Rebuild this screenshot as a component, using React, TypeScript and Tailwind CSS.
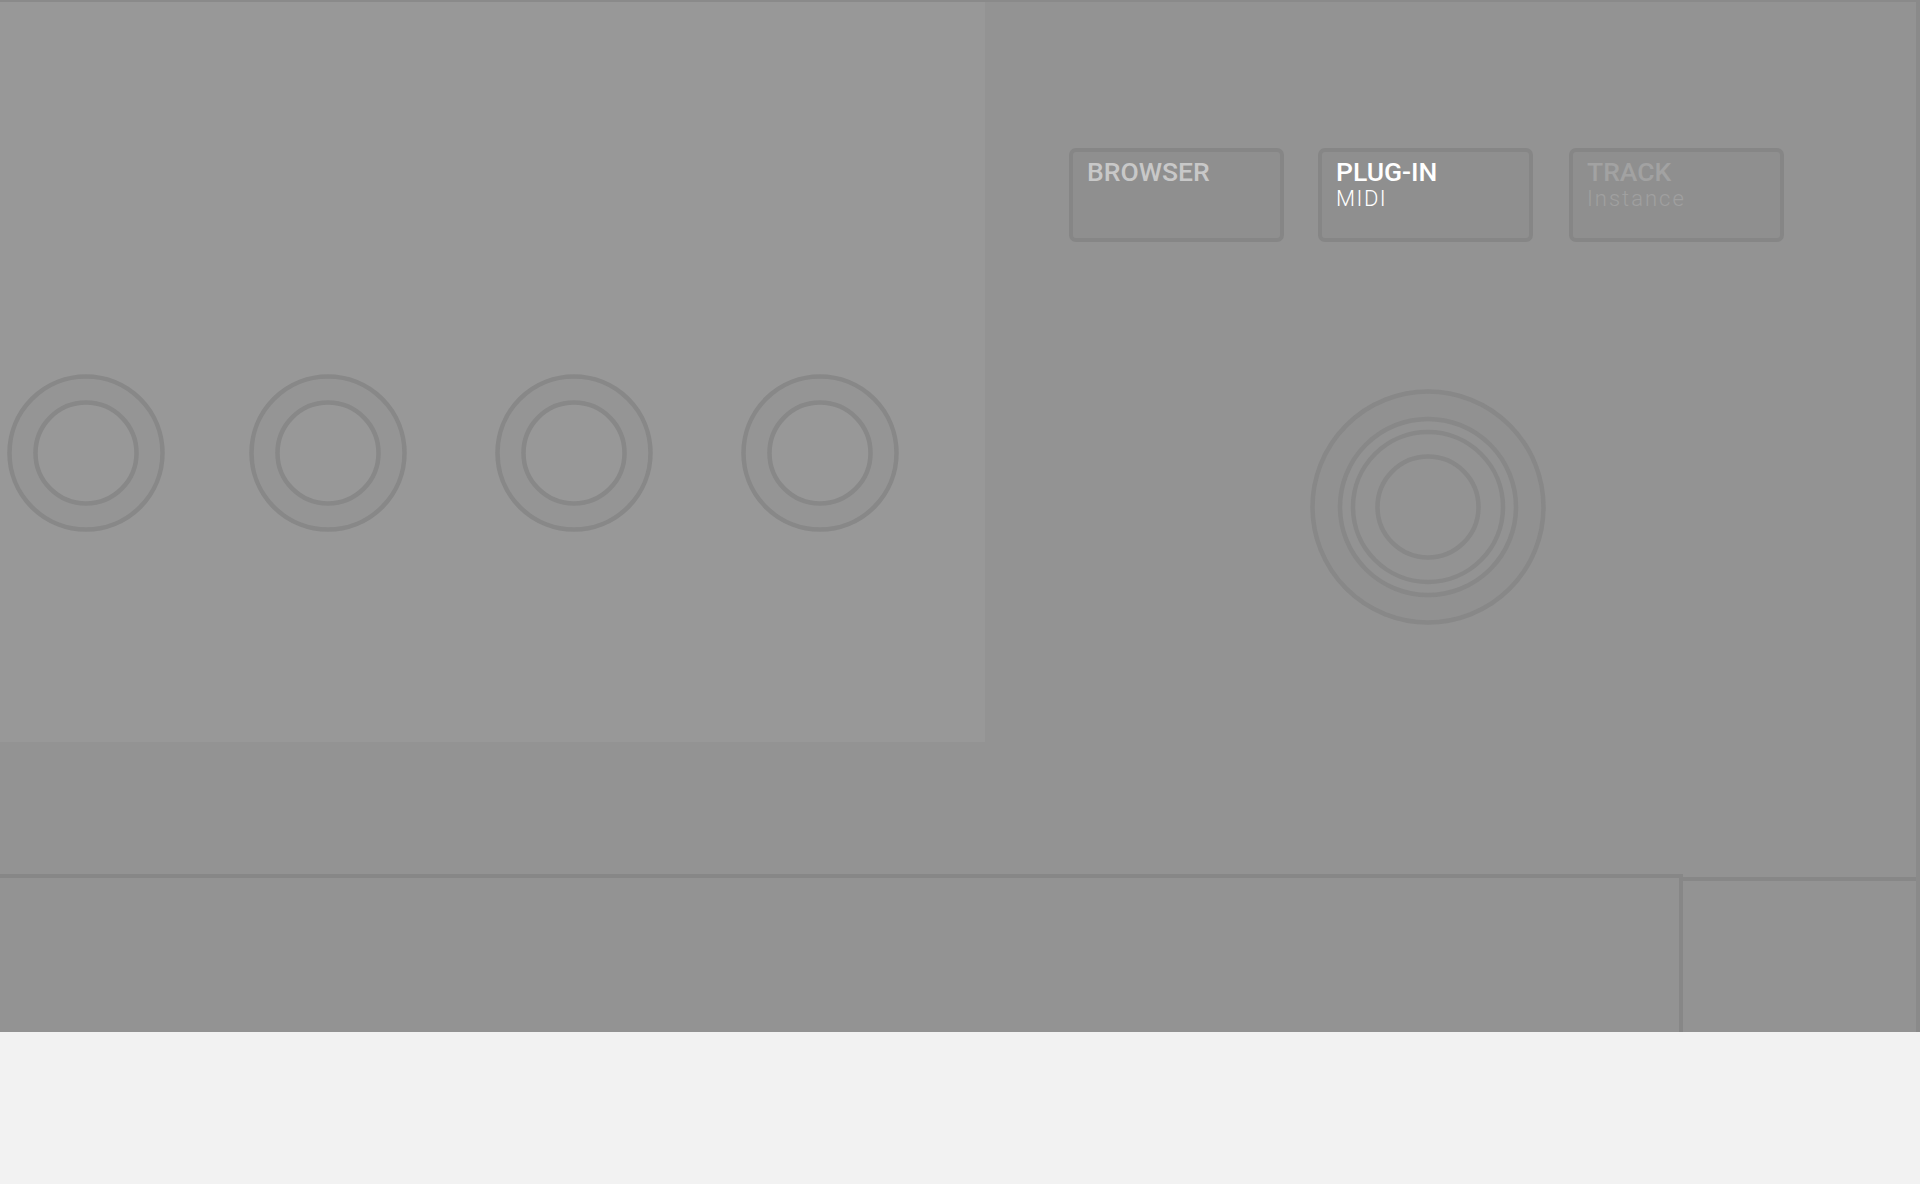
const font = { fontFamily: 'Roboto, "Noto Sans", sans-serif' }

function Knob({ className = '' }: { className?: string }) {
  return (
    <svg width="158" height="158" viewBox="0 0 158 158" className={`shrink-0 ${className}`}>
      <circle cx="79" cy="79" r="76.5" fill="#959595" stroke="#888888" strokeWidth="4.5" />
      <circle cx="79" cy="79" r="50.5" fill="#989898" stroke="#888888" strokeWidth="4.5" />
    </svg>
  )
}

function BigKnob() {
  return (
    <svg width="240" height="240" viewBox="0 0 240 240" className="shrink-0">
      <circle cx="120" cy="120" r="115.5" fill="#919191" stroke="#888888" strokeWidth="4.5" />
      <circle cx="120" cy="120" r="88" fill="#939393" stroke="#888888" strokeWidth="4.5" />
      <circle cx="120" cy="120" r="75" fill="none" stroke="#888888" strokeWidth="4.5" />
      <circle cx="120" cy="120" r="50.5" fill="none" stroke="#888888" strokeWidth="4.5" />
    </svg>
  )
}

interface ModeButtonProps {
  title: string
  sub?: string
  titleClass: string
  subClass?: string
  className?: string
}

function ModeButton({ title, sub, titleClass, subClass, className = '' }: ModeButtonProps) {
  return (
    <div
      className={`h-[94px] w-[215px] shrink-0 rounded-[7px] border-4 border-[#868686] bg-[#8f8f8f] px-[14px] pt-[6px] ${className}`}
    >
      <div className={`h-[27px] text-[26.5px] leading-[27px] font-medium ${titleClass}`}>{title}</div>
      {sub && (
        <div className={`mt-[3px] text-[22px] leading-[22px] font-light ${subClass}`}>{sub}</div>
      )}
    </div>
  )
}

export default function App() {
  return (
    <div className="flex h-[1184px] w-[1920px] flex-col bg-[#f2f2f2]" style={font}>
      <div className="flex h-[1032px] flex-col border-t-2 border-r-4 border-[#8a8a8a] bg-[#939393]">
        <div className="flex h-[872px] shrink-0">
          <div className="flex h-[740px] w-[985px] items-start gap-[88px] bg-[#989898] pt-[372px] pl-[7px]">
            <Knob />
            <Knob className="-ml-[4px]" />
            <Knob />
            <Knob />
          </div>
          <div className="flex flex-1 flex-col pt-[146px] pl-[84px]">
            <div className="flex gap-[34px]">
              <ModeButton title="BROWSER" titleClass="text-[#c8c8c8]" />
              <ModeButton title="PLUG-IN" sub="MIDI" titleClass="text-white" subClass="text-white tracking-[1.5px]" />
              <ModeButton
                title="TRACK"
                sub="Instance"
                className="ml-[2px]"
                titleClass="text-[#a2a2a2]"
                subClass="text-[#a0a0a0] tracking-[2px]"
              />
            </div>
            <div className="mt-[145px] ml-[239px]">
              <BigKnob />
            </div>
          </div>
        </div>
        <div className="flex flex-1">
          <div className="w-[1683px] border-t-4 border-r-4 border-[#878787]" />
          <div className="mt-[3px] flex-1 border-t-4 border-[#878787]" />
        </div>
      </div>
      <div className="flex-1" />
    </div>
  )
}
